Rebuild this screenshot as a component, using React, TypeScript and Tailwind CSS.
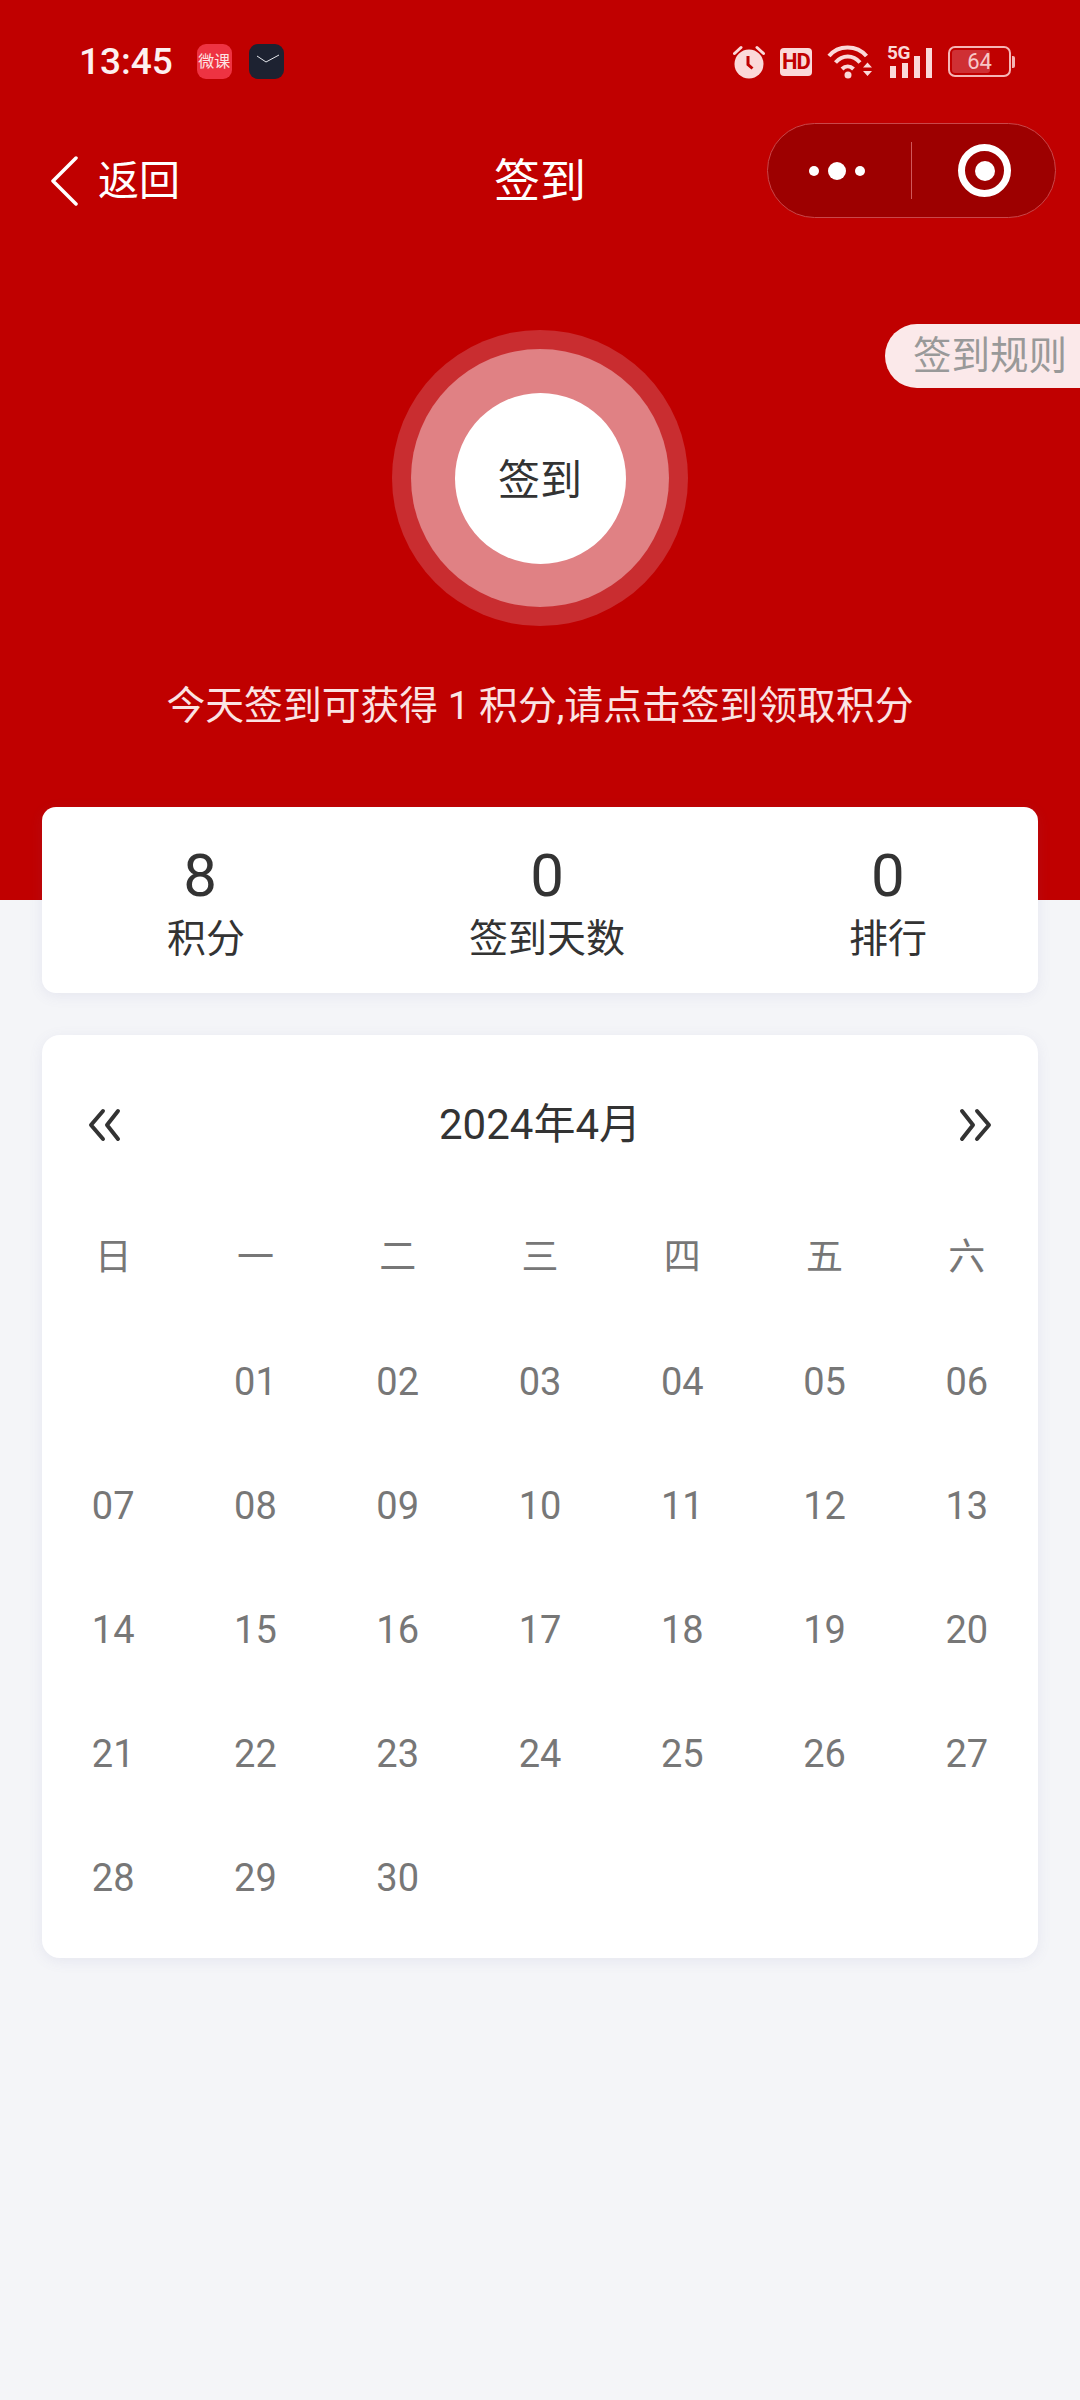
const weekDays = ["日", "一", "二", "三", "四", "五", "六"];

const dates = [
  "", "01", "02", "03", "04", "05", "06",
  "07", "08", "09", "10", "11", "12", "13",
  "14", "15", "16", "17", "18", "19", "20",
  "21", "22", "23", "24", "25", "26", "27",
  "28", "29", "30",
];

function AlarmIcon() {
  return (
    <svg width="32" height="34" viewBox="0 0 32 34">
      <circle cx="16" cy="19" r="14.5" fill="#fbd9d9" />
      <path d="M1.5 8.5 8 2.5M30.500 8.500 24 2.500" stroke="#fbd9d9" strokeWidth="3" strokeLinecap="round" />
      <path d="M15 11v8.500l4.500 4" fill="none" stroke="#c00000" strokeWidth="3" />
    </svg>
  );
}

function HdIcon() {
  return (
    <div className="flex h-[28px] w-[32px] items-center justify-center rounded-[4px] bg-[#fbd9d9] text-[22px] font-bold leading-none tracking-[-1px] text-[#c00000] font-['Roboto',sans-serif]">
      HD
    </div>
  );
}

function WifiIcon() {
  return (
    <svg width="45" height="34" viewBox="0 0 45 34">
      <g fill="none" stroke="#fbd9d9" strokeWidth="4">
        <path d="M2 11C11-0.500 30-0.500 39.500 11" />
        <path d="M8.500 17.500c7-8 17.500-8 24.500 0" />
        <path d="M15 24c3.500-3.500 8-3.500 11.500 0" />
      </g>
      <circle cx="21" cy="30" r="3.500" fill="#fbd9d9" />
      <path d="M36 22.500l4.500-5 4.500 5zM36 26l4.500 5 4.500-5z" fill="#fbd9d9" />
    </svg>
  );
}

function SignalIcon() {
  return (
    <div className="relative h-[32px] w-[46px]">
      <span className="absolute left-0 top-[-3px] text-[19px] font-bold leading-none tracking-[-0.5px] text-[#fbd9d9] font-['Roboto',sans-serif]">
        5G
      </span>
      <div className="absolute bottom-0 left-[3px] flex items-end gap-[6px]">
        <div className="h-[12px] w-[6px] bg-[#fbd9d9]" />
        <div className="h-[15px] w-[6px] bg-[#fbd9d9]" />
        <div className="h-[22px] w-[6px] bg-[#fbd9d9]" />
        <div className="h-[30px] w-[6px] bg-[#fbd9d9]" />
      </div>
    </div>
  );
}

function BatteryIcon() {
  return (
    <div className="flex items-center">
      <div className="relative h-[31px] w-[63px] overflow-hidden rounded-[7px] border-2 border-[#f5b5b5] p-[2px]">
        <div className="h-full w-[38px] rounded-[3px] bg-[#cf3034]" />
        <span className="absolute inset-0 flex items-center justify-center text-[22px] leading-none text-[#f8c8c8] font-['Roboto',sans-serif]">
          64
        </span>
      </div>
      <div className="ml-[1px] h-[12px] w-[3px] rounded-r-[2px] bg-[#f5b5b5]" />
    </div>
  );
}

function StatusBar() {
  return (
    <div className="flex h-[123px] items-center justify-between pl-[79px] pr-[65px]">
      <div className="flex items-center">
        <span className="text-[37px] font-medium leading-none text-[#fdf0f0]">13:45</span>
        <div className="ml-[24px] flex h-[35px] w-[35px] items-center justify-center rounded-[9px] bg-[#ee3342] text-[16px] leading-none text-[#fde4e4]">
          微课
        </div>
        <div className="ml-[17px] h-[35px] w-[35px] rounded-[9px] bg-[#1d2231]">
          <svg width="35" height="35" viewBox="0 0 35 35">
            <path d="M8 12l9 6 13-7" fill="none" stroke="#e6e8ee" strokeWidth="1" />
          </svg>
        </div>
      </div>
      <div className="flex items-center gap-[15px]">
        <AlarmIcon />
        <HdIcon />
        <WifiIcon />
        <SignalIcon />
        <BatteryIcon />
      </div>
    </div>
  );
}

function NavBar() {
  return (
    <div className="relative flex h-[95px] items-center justify-between pl-[50px] pr-[24px]">
      <div className="mt-[21px] flex items-center">
        <svg width="28" height="50" viewBox="0 0 28 50">
          <path d="M26 2 3 25l23 23" fill="none" stroke="#fff" strokeWidth="3.500" strokeLinecap="round" strokeLinejoin="round" />
        </svg>
        <span className="ml-[20px] text-[41px] leading-none text-white">返回</span>
      </div>
      <span className="absolute left-0 right-0 mt-[20px] text-center text-[46px] leading-none text-white">签到</span>
      <div className="flex h-[95px] w-[289px] items-center rounded-full border border-[#c9474a] bg-[#9d0000]">
        <div className="flex w-[143px] items-center justify-center gap-[9px] pr-[5px]">
          <div className="h-[10px] w-[10px] rounded-full bg-white" />
          <div className="h-[18px] w-[18px] rounded-full bg-white" />
          <div className="h-[10px] w-[10px] rounded-full bg-white" />
        </div>
        <div className="h-[57px] w-[1px] bg-[#d0585a]" />
        <div className="flex flex-1 items-center justify-center pl-[2px]">
          <div className="flex h-[53px] w-[53px] items-center justify-center rounded-full border-[7px] border-white">
            <div className="h-[20px] w-[20px] rounded-full bg-white" />
          </div>
        </div>
      </div>
    </div>
  );
}

function Hero() {
  return (
    <div className="relative h-[900px] bg-[#c00000]">
      <StatusBar />
      <NavBar />
      <div className="absolute right-0 top-[324px] flex h-[64px] w-[195px] items-center rounded-l-full bg-[#fbe9ea] pl-[28px] text-[38.500px] leading-none text-[#999]">
        签到规则
      </div>
      <div className="mx-auto mt-[112px] flex h-[296px] w-[296px] items-center justify-center rounded-full bg-[#c92d30]">
        <div className="flex h-[258px] w-[258px] items-center justify-center rounded-full bg-[#e08184]">
          <div className="flex h-[171px] w-[171px] items-center justify-center rounded-full bg-white pt-[5px] text-[42px] leading-none text-[#333]">
            签到
          </div>
        </div>
      </div>
      <p className="mt-[55px] text-center text-[38.800px] leading-[50px] text-[#fbe3e3]">
        今天签到可获得 1 积分,请点击签到领取积分
      </p>
    </div>
  );
}

function Stat({ value, label, valueClass }: { value: string; label: string; valueClass?: string }) {
  return (
    <div className="flex flex-col items-center">
      <span className={`text-[60px] leading-[64px] text-[#333] ${valueClass ?? ""}`}>{value}</span>
      <span className="mt-[8px] text-[39px] leading-[46px] text-[#333]">{label}</span>
    </div>
  );
}

function DoubleChevron({ right }: { right?: boolean }) {
  return (
    <svg width="33" height="34" viewBox="0 0 33 34">
      <path
        d={right ? "M3 3l11 14L3 31M18 3l12 14-12 14" : "M15 3 3 17l12 14M30 3 19 17l11 14"}
        fill="none"
        stroke="#333"
        strokeWidth="4"
        strokeLinecap="round"
        strokeLinejoin="round"
      />
    </svg>
  );
}

export default function App() {
  return (
    <div className="min-h-[2400px] w-[1080px] bg-[#f4f5f8] font-['Roboto','Noto_Sans_CJK_SC',sans-serif]">
      <Hero />

      <div className="relative mx-[42px] -mt-[93px] flex h-[186px] items-center justify-between rounded-[14px] bg-white pl-[125px] pr-[111px] pt-[5px] shadow-[0_3px_14px_rgba(110,110,170,0.10)]">
        <Stat value="8" label="积分" valueClass="pr-[12px]" />
        <Stat value="0" label="签到天数" />
        <Stat value="0" label="排行" />
      </div>

      <div className="mx-[42px] mt-[42px] rounded-[18px] bg-white pb-[18px] pt-[50px] shadow-[0_3px_14px_rgba(110,110,170,0.10)]">
        <div className="mb-[31px] flex h-[80px] items-center justify-between pl-[46px] pr-[46px]">
          <DoubleChevron />
          <span className="text-[42px] leading-none text-[#333]">2024年4月</span>
          <DoubleChevron right />
        </div>
        <div className="grid grid-cols-7">
          {weekDays.map((d) => (
            <div key={d} className="flex h-[124px] items-center justify-center text-[37px] text-[#777]">
              {d}
            </div>
          ))}
          {dates.map((d, i) => (
            <div key={i} className="flex h-[124px] items-center justify-center text-[38px] text-[#777]">
              {d}
            </div>
          ))}
        </div>
      </div>
    </div>
  );
}
